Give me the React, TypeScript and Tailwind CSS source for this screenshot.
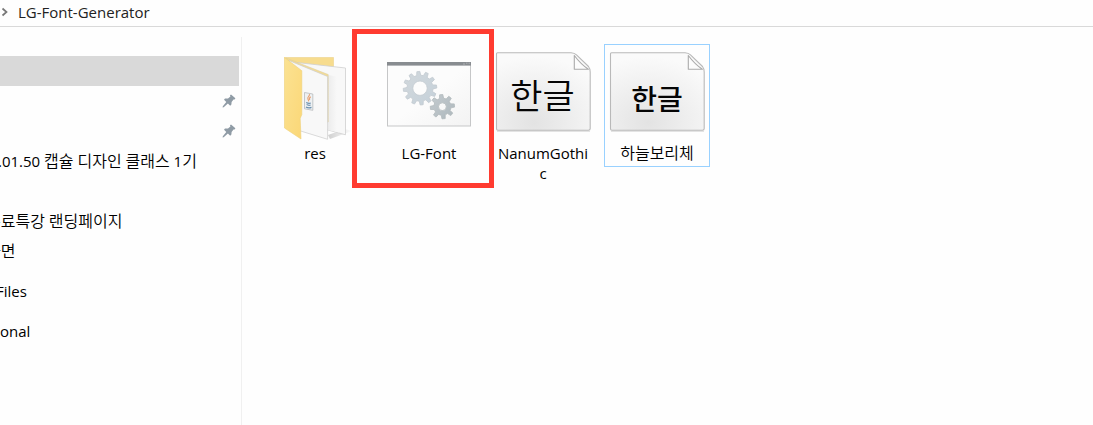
import type { ReactNode } from "react";
import clsx from "clsx";

function gearPath(cx: number, cy: number, outer: number, root: number, hole: number, teeth: number) {
    const step = (Math.PI * 2) / teeth;
    const point = (r: number, a: number) => `${(cx + r * Math.cos(a)).toFixed(2)} ${(cy + r * Math.sin(a)).toFixed(2)}`;
    const points: string[] = [];
    for (let i = 0; i < teeth; i++) {
        const a = i * step - Math.PI / 2 - 0.1;
        points.push(point(root, a - step * 0.3), point(outer, a - step * 0.17), point(outer, a + step * 0.17), point(root, a + step * 0.3));
    }
    return `M${points.join("L")}Z M${cx - hole} ${cy}a${hole} ${hole} 0 1 0 ${hole * 2} 0a${hole} ${hole} 0 1 0 ${-hole * 2} 0Z`;
}

function PinIcon() {
    return (
        <svg viewBox="0 0 14 14" className="w-3.5 h-3.5" fill="#8f9ba5" aria-hidden="true">
            <path d="M9 0.6 13.4 4.2 12.6 5.6 11.5 5.6 9.6 8 9.4 10.6 8.2 11.7 5.9 9.4 1.7 13.2 0.6 13.4 0.8 12.2 4.3 8 2 5.8 3 4.4 6 4.4 8.4 2.4 8 1.3Z" />
        </svg>
    );
}

function FolderIcon() {
    return (
        <svg viewBox="0 0 96 96" className="w-24 h-24" aria-hidden="true">
            <defs>
                <linearGradient id="folder-front" x1="0" y1="0" x2="1" y2="1">
                    <stop offset="0" stopColor="#fbe292" />
                    <stop offset="1" stopColor="#fbd777" />
                </linearGradient>
                <linearGradient id="folder-shadow" x1="0" y1="0" x2="1" y2="0">
                    <stop offset="0" stopColor="#d0d0d0" />
                    <stop offset="1" stopColor="#fdfdfd" />
                </linearGradient>
                <linearGradient id="page-shade" x1="0" y1="0" x2="1" y2="0">
                    <stop offset="0" stopColor="#ececec" />
                    <stop offset="0.8" stopColor="#f8f8f8" />
                </linearGradient>
            </defs>
            <path d="M61 88 78 82 85 84 63 92Z" fill="url(#folder-shadow)" />
            <path d="M17.5 10.5H66.5V30H30Z" fill="#f7dc8e" stroke="#edd28a" strokeWidth="0.6" />
            <path d="M30 15.5 78.5 21V87.8L61 83 30 76Z" fill="#f8f8f8" stroke="#cfcfcf" strokeWidth="0.8" />
            <path d="M61 28 72 30V85.5L61 83Z" fill="url(#page-shade)" />
            <path d="M19 11 61.2 27.5V75L34 80Z" fill="#f4dc94" stroke="#d9cba0" strokeWidth="0.5" />
            <path d="M22 13.5 60.6 29.5V92.3L32 83.5Z" fill="#f8f8f8" stroke="#cccccc" strokeWidth="0.7" />
            <path d="M17.5 10.5 34.8 23.7V67.5L33.2 71.5 34 92 17.5 81Z" fill="url(#folder-front)" stroke="#eed079" strokeWidth="0.6" />
            <path d="M37.5 45.5 45.8 47V63.3L37.5 61.8Z" fill="#eef1f3" stroke="#b7babd" strokeWidth="0.8" />
            <path d="M42.5 47.2c0.6 2-2.6 2.6-1.6 4.8 0.4 1 1 1.4 0.6 2.4M43.7 49.8c-1.8 1.2-1.6 2-1 3.2" fill="none" stroke="#e9a070" strokeWidth="1.1" />
            <path d="M39.2 55.4c1.6 0.9 3.6 1 4.6 0.6M39.6 57.6c1.4 0.8 3 0.8 4 0.4M38.9 60c1.8 1 4 1 5.6 0.4" fill="none" stroke="#6d91b0" strokeWidth="1.2" />
        </svg>
    );
}

function BatchIcon() {
    return (
        <svg viewBox="0 0 96 96" className="w-24 h-24" aria-hidden="true">
            <defs>
                <linearGradient id="window-fill" x1="0" y1="0" x2="1" y2="1">
                    <stop offset="0.5" stopColor="#fcfcfc" />
                    <stop offset="1" stopColor="#f3f3f3" />
                </linearGradient>
                <linearGradient id="gear-large" x1="0" y1="0" x2="1" y2="1">
                    <stop offset="0" stopColor="#d2d8dc" />
                    <stop offset="1" stopColor="#c5d1da" />
                </linearGradient>
                <linearGradient id="gear-small" x1="0" y1="0" x2="1" y2="1">
                    <stop offset="0" stopColor="#c4cbcf" />
                    <stop offset="1" stopColor="#aeb8bd" />
                </linearGradient>
            </defs>
            <rect x="6.5" y="16" width="83" height="63" fill="url(#window-fill)" stroke="#c6c7c8" />
            <rect x="6" y="15" width="84" height="3.6" fill="#888c90" />
            <path d="M82 17h2M85 16.2h1.5M87.5 16.2h1.5" stroke="#b5b8ba" strokeWidth="0.8" />
            <path d={gearPath(39, 41.2, 16.8, 13, 7.2, 12)} fill="url(#gear-large)" fillRule="evenodd" stroke="#c3cad0" strokeWidth="0.8" strokeLinejoin="round" />
            <path d={gearPath(61.4, 59.7, 12.2, 8.6, 3.9, 8)} fill="url(#gear-small)" fillRule="evenodd" stroke="#b3babd" strokeWidth="0.8" strokeLinejoin="round" />
        </svg>
    );
}

function FontFileIcon({ id, bold = false }: { id: string; bold?: boolean }) {
    return (
        <svg viewBox="0 0 96 96" className="w-24 h-24" aria-hidden="true">
            <defs>
                <radialGradient id={id} cx="0.4" cy="0.9" r="0.85">
                    <stop offset="0" stopColor="#e3e3e3" />
                    <stop offset="1" stopColor="#fafafa" />
                </radialGradient>
            </defs>
            <path d="M2 84.3H95" stroke="#dcdcdc" />
            <path d="M2.5 5.8H76Q79.5 6 81.5 7.8L93.5 19.5Q95.2 21.5 95.2 25V81.5Q95.2 83.2 93.5 83.2H3Q1.5 83.2 1.5 81.7V6.8Q1.5 5.8 2.5 5.8Z" fill={`url(#${id})`} stroke="#b9b9b9" strokeWidth="1.1" />
            <path d="M79.3 8.5V22.2H93.4Q86 17.5 79.3 8.5Z" fill="#fcfcfc" stroke="#aaaaaa" strokeWidth="1.1" strokeLinejoin="round" />
            <text
                x={bold ? 48 : 47.5}
                y={bold ? 63 : 62}
                textAnchor="middle"
                fill="#050505"
                className={clsx("font-['Noto_Sans_CJK_KR',sans-serif]", bold ? "text-[28px] font-medium" : "text-[35px] font-[350]")}
            >
                한글
            </text>
        </svg>
    );
}

const sidebarRows: { label?: string; className?: string; selected?: boolean; pinned?: boolean }[] = [
    { selected: true },
    { pinned: true },
    { pinned: true },
    { label: ".01.50 캡슐 디자인 클래스 1기", className: "-ml-0.5" },
    {},
    { label: "무료특강 랜딩페이지", className: "-ml-3.5" },
    { label: "화면", className: "-ml-3.5" },
    { label: "Files", className: "mt-2.5 -ml-1" },
    { label: "onal", className: "mt-2.5" },
];

const files: { name: string; icon: ReactNode; selected?: boolean; marked?: boolean }[] = [
    { name: "res", icon: <FolderIcon /> },
    { name: "LG-Font", icon: <BatchIcon />, marked: true },
    { name: "NanumGothic", icon: <FontFileIcon id="page-regular" /> },
    { name: "하늘보리체", icon: <FontFileIcon id="page-bold" bold />, selected: true },
];

// Hangul is set larger than the Latin text around it
function Label({ text }: { text: string }) {
    return text.split(/([가-힣]+)/).map((part, i) =>
        i % 2 ? <span key={i} className="text-[16px] font-[350]">{part}</span> : part
    );
}

export default function App() {
    return (
        <div className="flex flex-col min-h-screen overflow-hidden bg-[#fefefe] text-black text-[15px] leading-5 font-['Open_Sans','Noto_Sans_CJK_KR',sans-serif]">
            <header className="flex items-center h-[27px] gap-2 pb-0.5 border-b border-[#d9d9d9]">
                <svg viewBox="0 0 10 10" className="w-2.5 h-2.5" fill="none" stroke="#777777" strokeWidth="1.7" aria-hidden="true">
                    <path d="M2.5 1.5 6.5 5 2.5 8.5" />
                </svg>
                <h1 className="text-[#222222]">LG-Font-Generator</h1>
            </header>

            <div className="flex flex-1 pt-2.5">
                <nav className="w-[242px] shrink-0 border-r border-[#f0f0f0] pt-[19px] pr-0.5 overflow-hidden">
                    <ul>
                        {sidebarRows.map((row, i) => (
                            <li
                                key={i}
                                className={clsx("flex items-center h-[30px] whitespace-nowrap", row.selected && "bg-[#d9d9d9]", row.pinned && "justify-end pr-[3px]", row.className)}
                            >
                                {row.pinned && <PinIcon />}
                                {row.label && <span><Label text={row.label} /></span>}
                            </li>
                        ))}
                    </ul>
                </nav>

                <main className="flex-1 pl-5 pt-[7px]">
                    <ul className="flex flex-wrap gap-2">
                        {files.map((file) => (
                            <li
                                key={file.name}
                                className={clsx("relative flex flex-col items-center self-start w-[106px] pt-0.5 pb-[3px] border", file.selected ? "border-[#99d1ff]" : "border-transparent")}
                            >
                                {file.icon}
                                <span className="w-[92px] text-center wrap-anywhere"><Label text={file.name} /></span>
                                {file.marked && <div className="absolute -left-[25px] -top-4 w-[142px] h-[159px] border-5 border-[#ff3b30]" />}
                            </li>
                        ))}
                    </ul>
                </main>
            </div>
        </div>
    );
}
